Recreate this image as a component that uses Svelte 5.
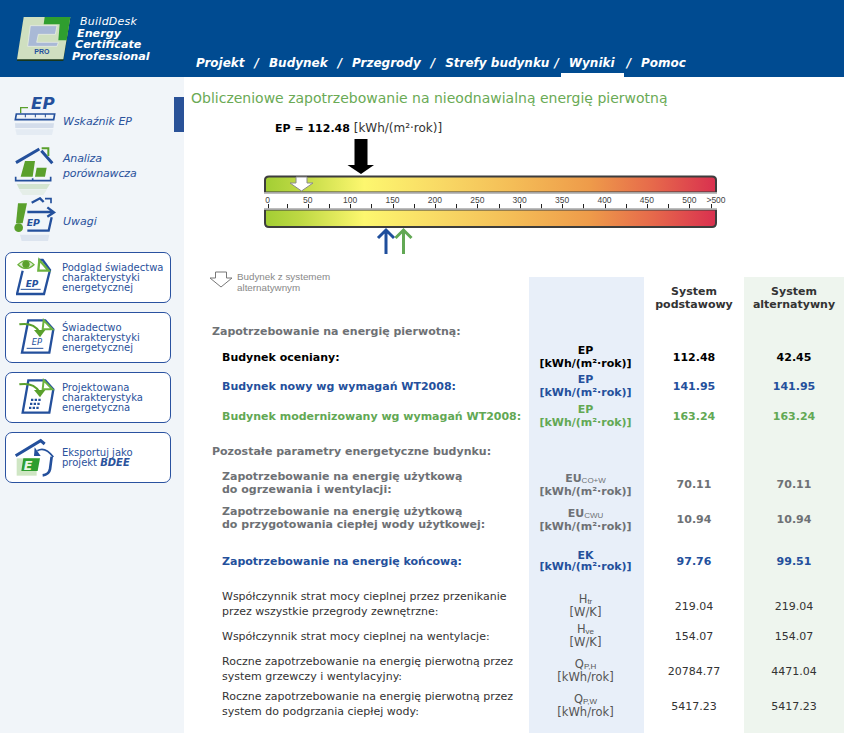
<script>
  const nav = [
    { t: 'Projekt', sep: 'n' }, { t: 'Budynek', sep: 'n' }, { t: 'Przegrody', sep: 'n' }, { t: 'Strefy budynku', sep: 'pre' }, { t: 'Wyniki', active: true, sep: 'post' }, { t: 'Pomoc' }
  ];
  const labels = [0, 50, 100, 150, 200, 250, 300, 350, 400, 450, 500];
  const ticks = Array.from({ length: 22 }, (_, i) => i);
  const tickX = (i) => (i === 0 ? 267.7 : i === 1 ? 286.7 : 307.7 + (i - 2) * 21.2);
  const unitE = '[kWh/(m²·rok)]';
  const rows = [
    { kind: 'sec', h: 27, l: ['Zapotrzebowanie na energię pierwotną:'] },
    { kind: 'strong black', h: 26, l: ['Budynek oceniany:'], s: 'EP', u: unitE, a: '112.48', b: '42.45' },
    { kind: 'strong blue', gap: 3, h: 26, l: ['Budynek nowy wg wymagań WT2008:'], s: 'EP', u: unitE, a: '141.95', b: '141.95' },
    { kind: 'strong green', gap: 4, h: 26, l: ['Budynek modernizowany wg wymagań WT2008:'], s: 'EP', u: unitE, a: '163.24', b: '163.24' },
    { kind: 'sec', gap: 2, h: 39, l: ['Pozostałe parametry energetyczne budynku:'] },
    { kind: 'strong grey', h: 26, l: ['Zapotrzebowanie na energię użytkową', 'do ogrzewania i wentylacji:'], s: 'EU', sub: 'CO+W', u: unitE, a: '70.11', b: '70.11' },
    { kind: 'strong grey', gap: 9, h: 26, l: ['Zapotrzebowanie na energię użytkową', 'do przygotowania ciepłej wody użytkowej:'], s: 'EU', sub: 'CWU', u: unitE, a: '10.94', b: '10.94' },
    { kind: 'strong blue tight', gap: 17, h: 26, l: ['Zapotrzebowanie na energię końcową:'], s: 'EK', u: unitE, a: '97.76', b: '99.51' },
    { kind: 'plain', gap: 15, h: 26, l: ['Współczynnik strat mocy cieplnej przez przenikanie', 'przez wszystkie przegrody zewnętrzne:'], s: 'H', sub: 'tr', u: '[W/K]', a: '219.04', b: '219.04' },
    { kind: 'plain', gap: 8, h: 26, l: ['Współczynnik strat mocy cieplnej na wentylacje:'], s: 'H', sub: 've', u: '[W/K]', a: '154.07', b: '154.07' },
    { kind: 'plain', gap: 5, h: 26, l: ['Roczne zapotrzebowanie na energię pierwotną przez', 'system grzewczy i wentylacyjny:'], s: 'Q', sub: 'P,H', u: '[kWh/rok]', a: '20784.77', b: '4471.04' },
    { kind: 'plain', gap: 9, h: 26, l: ['Roczne zapotrzebowanie na energię pierwotną przez', 'system do podgrzania ciepłej wody:'], s: 'Q', sub: 'P,W', u: '[kWh/rok]', a: '5417.23', b: '5417.23' }
  ];
</script>

<div class="page">
  <header class="top">
    <div class="brand">
      <svg class="logo" viewBox="45 45 165 135" width="55" height="45" aria-hidden="true">
        <path d="M68 52 H208 L187 180 H48 Z" fill="#17361c" />
        <path d="M68 48 H208 L187 175 H48 Z" fill="#cfdfc0" />
        <path d="M131 48 H208 L197 118 H172 L176 70 H128 Z" fill="#2f9e2f" />
        <path d="M88 74 H168 L163 100 H112 L107 124 H172 L168 136 H80 Z" fill="#a9b9d6" stroke="#eef3ea" stroke-width="2" />
        <text x="100" y="160" class="pro">PRO</text>
      </svg>
      <div class="brandtext">
        <span class="b0">BuildDesk</span>
        <span class="b1">Energy</span>
        <span class="b2">Certificate</span>
        <span class="b3">Professional</span>
      </div>
    </div>
    <nav class="nav">
      {#each nav as n}
        <span class="navitem" class:active={n.active}>{n.t}</span>
        {#if n.sep}<span class="sep {n.sep}">/</span>{/if}
      {/each}
    </nav>
  </header>

  <div class="body">
    <aside class="side">
      <div class="sideitem s1">
        <svg viewBox="42 276 132 138" width="44" height="46" aria-hidden="true">
          <text x="93" y="328" class="ep big">EP</text>
          <path d="M62 340 V323 H84" fill="none" stroke="#5aa02c" stroke-width="4" />
          <path d="M49 342 H164 L161 359 H46 Z" fill="none" stroke="#24509c" stroke-width="5" />
          <path d="M76 342 V352 M106 342 V352 M136 342 V352" stroke="#24509c" stroke-width="3" />
          <path d="M45 370 H162 L160 384 H46 Z" fill="#24509c" opacity=".14" />
          <path d="M46 388 H160 L156 405 H50 Z" fill="#24509c" opacity=".06" />
        </svg>
        <span class="sidetext">Wskaźnik EP</span>
      </div>
      <div class="marker"></div>
      <div class="sideitem s2">
        <svg viewBox="42 435 132 150" width="44" height="50" aria-hidden="true">
          <path d="M48 488 L118 447 M124 452 L157 490" fill="none" stroke="#24509c" stroke-width="9" />
          <path d="M125 445 H145 V468" fill="none" stroke="#5aa02c" stroke-width="6" />
          <path d="M75 483 H105 L98 530 H62 Z M110 503 H140 L135 530 H105 Z" fill="#5aa02c" />
          <path d="M47 530 V542 H152 V530 M98 535 V542" fill="none" stroke="#24509c" stroke-width="5" />
          <path d="M50 552 H150 L140 568 H58 Z" fill="#5aa02c" opacity=".2" />
          <path d="M58 570 H140 L130 585 H68 Z" fill="#5aa02c" opacity=".08" />
        </svg>
        <span class="sidetext">Analiza<br />porównawcza</span>
      </div>
      <div class="sideitem s3">
        <svg viewBox="42 591 132 132" width="44" height="44" aria-hidden="true">
          <path d="M54 610 H81 L68 670 H48 Z" fill="#5aa02c" />
          <circle cx="56" cy="683" r="13" fill="#5aa02c" />
          <path d="M95 608 L120 595 L131 606" fill="none" stroke="#24509c" stroke-width="7" />
          <path d="M135 596 H153 V610" fill="none" stroke="#24509c" stroke-width="5" />
          <path d="M82 636 H158 M142 622 L162 637 L142 650" fill="none" stroke="#24509c" stroke-width="7" />
          <text x="80" y="678" class="ep mid">EP</text>
          <path d="M155 652 L146 692 H82" fill="none" stroke="#24509c" stroke-width="7" />
          <path d="M60 704 H148 L144 723 H65 Z" fill="#24509c" opacity=".1" />
        </svg>
        <span class="sidetext">Uwagi</span>
      </div>

      <div class="btn">
        <svg viewBox="48 48 120 132" width="40" height="44" aria-hidden="true">
          <path d="M68 92 L51 162 H132 L150 90 L128 60 H115" fill="#fff" stroke="#24509c" stroke-width="7" />
          <path d="M118 60 L115 92 H146 Z" fill="#fff" stroke="#6db33f" stroke-width="7" />
          <path d="M54 74 Q78 50 102 74 Q78 96 54 74 Z" fill="#dcebd0" stroke="#6db33f" stroke-width="4" />
          <circle cx="78" cy="73" r="11" fill="#5aa02c" />
          <text x="77" y="140" class="ep small">EP</text>
          <path d="M62 148 H122" stroke="#24509c" stroke-width="3" />
        </svg>
        <span>Podgląd świadectwa<br />charakterystyki<br />energetycznej</span>
      </div>
      <div class="btn">
        <svg viewBox="48 228 120 132" width="40" height="44" aria-hidden="true">
          <path d="M85 241 L66 338 H148 L160 268 L136 241 Z" fill="#fff" stroke="#24509c" stroke-width="7" />
          <path d="M131 241 L128 268 H157 Z" fill="#fff" stroke="#6db33f" stroke-width="6" />
          <path d="M58 253 Q100 246 118 275" fill="none" stroke="#5aa02c" stroke-width="6" />
          <path d="M102 270 H136 L120 292 Z" fill="#5aa02c" />
          <text x="95" y="315" class="ep small thin">EP</text>
          <path d="M80 325 H130" stroke="#24509c" stroke-width="3" />
        </svg>
        <span>Świadectwo<br />charakterystyki<br />energetycznej</span>
      </div>
      <div class="btn">
        <svg viewBox="48 408 120 132" width="40" height="44" aria-hidden="true">
          <path d="M85 421 L68 518 H148 L160 448 L136 421 Z" fill="#fff" stroke="#24509c" stroke-width="7" />
          <path d="M131 421 L128 448 H157 Z" fill="#fff" stroke="#6db33f" stroke-width="6" />
          <path d="M58 433 Q100 426 118 455" fill="none" stroke="#5aa02c" stroke-width="6" />
          <path d="M102 450 H136 L120 472 Z" fill="#5aa02c" />
          <path d="M93 476 H100 V483 H93 Z M104 476 H111 V483 H104 Z M115 476 H122 V483 H115 Z M90 488 H97 V495 H90 Z M101 488 H108 V495 H101 Z M112 488 H119 V495 H112 Z M87 500 H94 V507 H87 Z M98 500 H105 V507 H98 Z M109 500 H116 V507 H109 Z" fill="#24509c" />
        </svg>
        <span>Projektowana<br />charakterystyka<br />energetyczna</span>
      </div>
      <div class="btn">
        <svg viewBox="42 588 126 132" width="42" height="44" aria-hidden="true">
          <path d="M47 647 L122 602 L134 612" fill="none" stroke="#24509c" stroke-width="9" />
          <path d="M50 655 H110 V707 H50 Z" fill="#cfe6c4" />
          <path d="M70 655 H120 L113 693 H64 Z" fill="#2f9e2f" />
          <text x="71" y="690" class="elet">E</text>
          <path d="M160 651 Q135 618 112 632" fill="none" stroke="#24509c" stroke-width="5" />
          <path d="M104 622 L122 648 L102 648 Z" fill="#24509c" />
          <path d="M155 650 L150 688 Q147 704 128 706" fill="none" stroke="#24509c" stroke-width="8" />
        </svg>
        <span>Eksportuj jako<br />projekt <b><i>BDEE</i></b></span>
      </div>
    </aside>

    <main class="main">
      <h1 class="title">Obliczeniowe zapotrzebowanie na nieodnawialną energię pierwotną</h1>
      <svg class="gauge" viewBox="184 110 660 158" width="660" height="158" role="img">
        <defs>
          <linearGradient id="g" x1="0" x2="1" y1="0" y2="0">
            <stop offset="0" stop-color="#a2ce34" />
            <stop offset=".08" stop-color="#bfd944" />
            <stop offset=".22" stop-color="#fdf76f" />
            <stop offset=".4" stop-color="#f8d764" />
            <stop offset=".55" stop-color="#f4bd57" />
            <stop offset=".72" stop-color="#ee9b4a" />
            <stop offset=".86" stop-color="#e6694b" />
            <stop offset="1" stop-color="#d9304f" />
          </linearGradient>
        </defs>
        <text x="275" y="132" class="eptop"><tspan class="epb">EP = 112.48</tspan> [kWh/(m²·rok)]</text>
        <path d="M354.5 139 H367.5 V165 H374 L361 174 L347.5 165 H354.5 Z" fill="#000" />

        <path d="M265 192.5 V180 Q265 176.5 269 176.5 H712 Q716 176.5 716 180 V192.5 Z" fill="url(#g)" stroke="#3d3d3d" stroke-width="2" />
        <path d="M264 193 H717" stroke="#c9c9c9" stroke-width="1.5" />
        <path d="M296 177 H307 V183 H313 L301.5 191 L290 183 H296 Z" fill="#fff" stroke="#8a8a8a" stroke-width="1" />

        {#each labels as v, i}
          <text x={tickX(i * 2)} y="203" class="scale">{v}</text>
        {/each}
        <text x="716" y="203" class="scale">&gt;500</text>
        {#each ticks as i}
          <path d={`M${Math.round(tickX(i)) + 0.5} 204 V209`} stroke="#222" stroke-width="1" />
        {/each}

        <path d="M265 209.5 V223 Q265 227 269 227 H712 Q716 227 716 223 V209.5 Z" fill="url(#g)" stroke="#3d3d3d" stroke-width="2" />
        <path d="M264 209 H717" stroke="#c9c9c9" stroke-width="1.5" />

        <path d="M386 231 V254 M378 238 L386 230 L394 238" fill="none" stroke="#1f4e9c" stroke-width="3" />
        <path d="M403.5 231 V254 M395.5 238 L403.5 230 L411.5 238" fill="none" stroke="#62a854" stroke-width="3" />
      </svg>

      <section class="table">
        <div class="row head">
          <div class="legend">
            <svg viewBox="0 0 24 17" width="24" height="17" aria-hidden="true">
              <path d="M6.5 1 H17.5 V7 H23 L12 16 L1 7 H6.5 Z" fill="#fff" stroke="#777" stroke-width="1" />
            </svg>
            <span>Budynek z systemem<br />alternatywnym</span>
          </div>
          <div></div>
          <div class="colh">System<br />podstawowy</div>
          <div class="colh">System<br />alternatywny</div>
        </div>
        {#each rows as r}
          <div class="row {r.kind}" class:two={r.l.length > 1} style:margin-top={`${r.gap ?? 0}px`} style:height={`${r.h}px`}>
            <div class="lab">{#each r.l as line}<div>{line}</div>{/each}</div>
            {#if r.s}
              <div class="sym">
                <div>{r.s}<sub>{r.sub ?? ''}</sub></div>
                <div>{r.u}</div>
              </div>
              <div class="val">{r.a}</div>
              <div class="val">{r.b}</div>
            {/if}
          </div>
        {/each}
      </section>
    </main>
  </div>
</div>

<style>
  :global(body) { margin: 0; background: #fff; overflow: hidden; }
  .page { width: 844px; height: 733px; overflow: hidden; font-family: "DejaVu Sans", Verdana, sans-serif; display: flex; flex-direction: column; }

  .top { height: 77px; flex: none; background: #004b91; display: flex; align-items: stretch; color: #fff; }
  .brand { width: 196px; flex: none; display: flex; padding: 16px 0 0 16px; box-sizing: border-box; }
  .logo { flex: none; }
  .pro { font: bold 21px "Liberation Sans", sans-serif; fill: #24509c; }
  .brandtext { display: flex; flex-direction: column; font-style: italic; font-weight: bold; font-size: 11.2px; line-height: 11.5px; margin-left: 0; }
  .brandtext .b0 { font-weight: normal; font-size: 11px; letter-spacing: .25px; margin-left: 9px; }
  .brandtext .b1 { margin-left: 6px; }
  .brandtext .b2 { margin-left: 4px; }
  .brandtext .b3 { margin-left: 1px; }

  .nav { display: flex; align-items: flex-end; font-weight: bold; font-style: italic; font-size: 12px; }
  .navitem, .sep { height: 29px; line-height: 30px; white-space: nowrap; }
  .sep.n { margin: 0 10px; }
  .sep.pre { margin: 0 2px 0 5px; }
  .sep.post { margin: 0 10px 0 3px; }
  .navitem.active { box-sizing: border-box; border-bottom: 4px solid #fff; padding: 0 9px 0 8px; }

  .body { flex: 1; display: flex; min-height: 0; }
  .side { width: 184px; flex: none; background: #f1f5f9; box-sizing: border-box; position: relative; padding-top: 19px; color: #2a529c; }
  .sideitem { display: flex; align-items: flex-start; padding-left: 14px; }
  .sidetext { font-style: italic; font-size: 11px; line-height: 15px; margin-left: 5px; }
  .s1 { height: 49px; }
  .s1 svg { margin-top: -4px; }
  .s1 .sidetext { margin-top: 18px; }
  .s2 { height: 52px; }
  .s2 .sidetext { margin-top: 6px; letter-spacing: -.15px; }
  .s3 { height: 55px; }
  .s3 .sidetext { margin-top: 17px; }
  .marker { position: absolute; left: 174px; top: 20px; width: 10px; height: 35px; background: #2a5298; }
  .ep { font-family: "DejaVu Sans", sans-serif; font-weight: bold; font-style: italic; fill: #24509c; }
  .ep.big { font-size: 50px; }
  .ep.mid { font-size: 28px; }
  .ep.small { font-size: 27px; }
  .ep.thin { font-weight: normal; font-size: 25px; }
  .elet { font: italic bold 38px "DejaVu Sans", sans-serif; fill: #eaf5e4; }

  .btn { width: 166px; height: 51px; box-sizing: border-box; margin: 0 0 9px 5px; background: #fff; border: 1px solid #2a52a0; border-radius: 7px; display: flex; align-items: center; font-size: 10px; line-height: 10px; color: #2a529c; position: relative; padding-left: 56px; }
  .btn svg { position: absolute; left: 10px; top: 3px; }
  .btn:last-child svg { left: 8px; }

  .main { flex: 1; min-width: 0; display: flex; flex-direction: column; }
  .title { margin: 0; height: 33px; padding: 12px 0 0 7px; box-sizing: border-box; font-weight: normal; font-size: 14px; line-height: 18px; color: #6aaa55; white-space: nowrap; }
  .gauge { display: block; flex: none; }
  .eptop { font-size: 12px; fill: #333; }
  .epb { font-size: 11px; font-weight: bold; fill: #000; }
  .scale { font: 8.5px "Liberation Sans", Arial, sans-serif; fill: #444; text-anchor: middle; }

  .table { flex: 1; background: linear-gradient(90deg, transparent 345px, #e8eff9 345px, #e8eff9 460px, transparent 460px, transparent 560px, #eef5ee 560px) 0 9px no-repeat; }
  .row { display: grid; grid-template-columns: 345px 115px 100px 100px; align-items: center; font-size: 11px; line-height: 13px; color: #333; }
  .head { height: 49px; align-items: start; }
  .colh { text-align: center; font-weight: bold; font-size: 11px; padding-top: 17px; color: #333; }
  .legend { display: flex; margin-left: 25px; padding-top: 3px; font: 9.8px/11px "Liberation Sans", Arial, sans-serif; color: #888; gap: 4px; }
  .lab { padding-left: 38px; line-height: 15px; }
  .sec .lab { padding-left: 28px; padding-top: 2px; font-weight: bold; color: #6e7175; }
  .strong.grey .lab { line-height: 13px; padding-bottom: 3px; }
  .plain.two .lab { padding-bottom: 4px; }
  .sym, .val { text-align: center; }
  .sym { padding-right: 2px; }
  .sym sub { font: normal 8px "Liberation Sans", Arial, sans-serif; vertical-align: baseline; position: relative; top: 1px; }
  .strong { font-weight: bold; }
  .black { color: #000; }
  .blue { color: #24509c; }
  .green { color: #62a854; }
  .grey { color: #6e7175; }
  .plain { color: #333; }
  .plain .sym { color: #555; font-size: 11.5px; }
  .tight .sym { line-height: 11.5px; }
</style>
